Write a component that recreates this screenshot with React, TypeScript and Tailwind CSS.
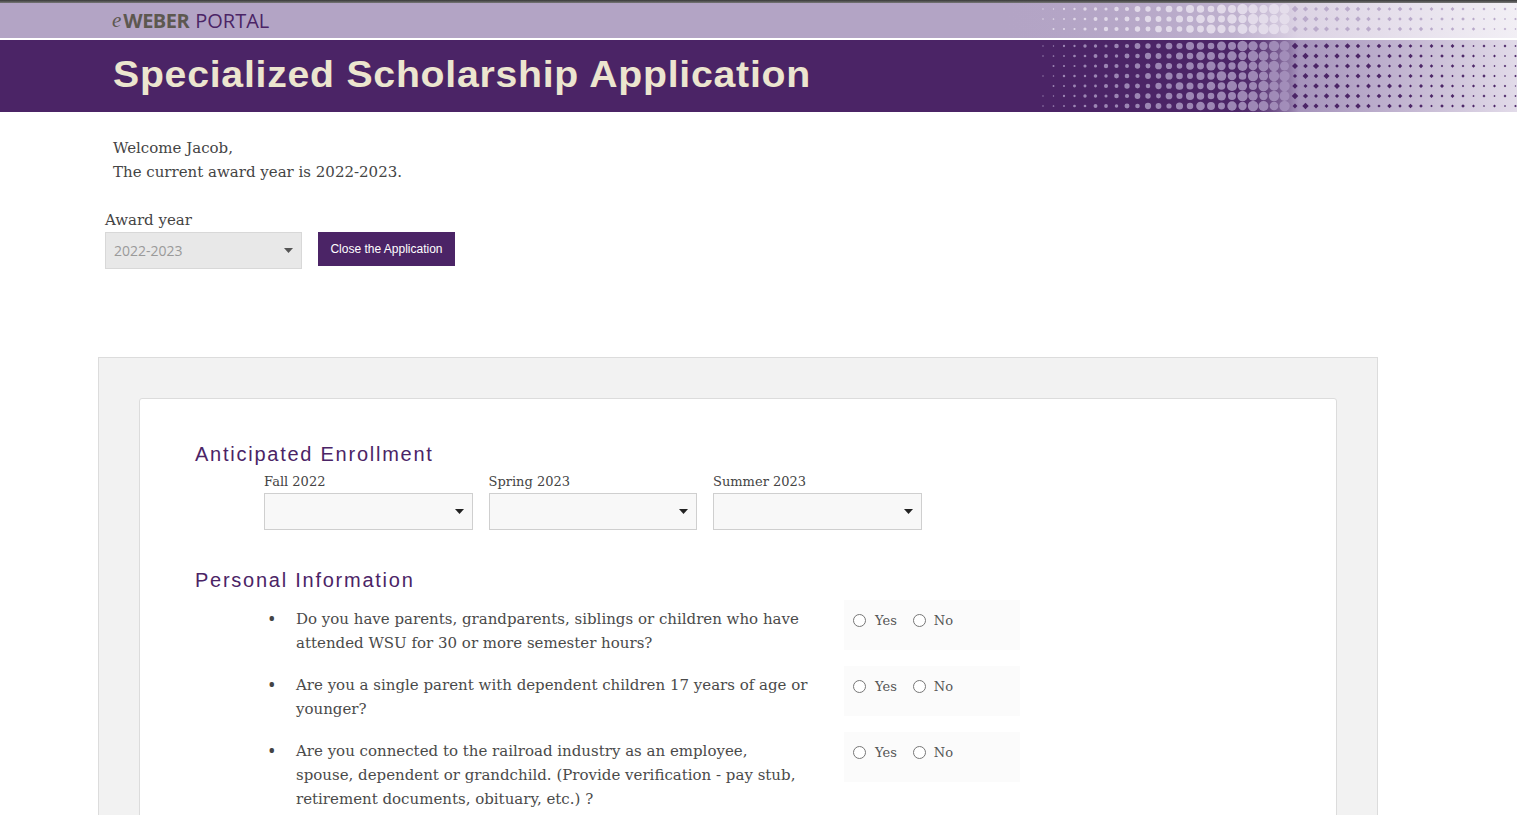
import React from "react";

function Halftone({ h, dark }: { h: number; dark: boolean }) {
  const dots: React.ReactNode[] = [];
  const W = 520;
  for (let r = 0; r * 10 + 5 < h; r++) {
    for (let c = 0; c * 10.5 < W; c++) {
      const x = c * 10.5 + 4;
      const y = r * 10 + 6;
      const gx = x + 997;
      const jitter = ((r * 7 + c * 13) % 5) / 5;
      if (gx < 1292) {
        const rad = Math.max(0, ((gx - 1010) / 250) * 5.5);
        const rr = rad * (0.75 + 0.35 * jitter);
        if (rr > 0.6)
          dots.push(
            <circle key={`${r}-${c}`} cx={x} cy={y} r={Math.min(rr, 5.2)} fill={dark ? "#a591bd" : "#e6dfec"} opacity={0.9} />
          );
      } else {
        const s = Math.max(0.7, 3 - ((gx - 1292) / 228) * 1.8) * (0.7 + 0.5 * jitter);
        dots.push(
          <path
            key={`${r}-${c}`}
            d={`M${x - s} ${y}L${x} ${y - s}L${x + s} ${y}L${x} ${y + s}Z`}
            fill={dark ? "#4b2466" : "#b9a9ca"}
          />
        );
      }
    }
  }
  const id = dark ? "gd" : "gl";
  return (
    <svg width={W} height={h} className="absolute right-0 top-0" viewBox={`0 0 ${W} ${h}`}>
      <defs>
        <linearGradient id={id} x1="0" x2="1" y1="0" y2="0">
          <stop offset="0" stopColor={dark ? "#4b2466" : "#b4a4c6"} stopOpacity="0" />
          <stop offset="0.45" stopColor={dark ? "#4b2466" : "#c6b9d4"} stopOpacity={dark ? 0 : 0.6} />
          <stop offset="0.58" stopColor={dark ? "#a593bb" : "#dcd3e4"} />
          <stop offset="1" stopColor={dark ? "#e2dbe9" : "#f2eff5"} />
        </linearGradient>
      </defs>
      <rect x="0" y="0" width={W} height={h} fill={`url(#${id})`} />
      {dots}
    </svg>
  );
}

function Caret({ color = "#222" }: { color?: string }) {
  return (
    <svg width="9" height="5" viewBox="0 0 9 5">
      <path d="M0 0H9L4.5 5Z" fill={color} />
    </svg>
  );
}

function Radio() {
  return <span className="inline-block h-[13px] w-[13px] rounded-full border border-[#777] bg-white" />;
}

const serif = "font-['DejaVu_Serif',serif]";

function Question({ text }: { text: string }) {
  return (
    <li className="flex">
      <div className="flex w-[588px] pl-[12px]">
        <span className="w-[28px] shrink-0 text-[20px] leading-[24px] text-[#444]">•</span>
        <span className={`${serif} w-[513px] text-[15px] leading-[24px] text-[#4a4a4a]`}>{text}</span>
      </div>
      <div className="-mt-[7px] flex h-[50px] w-[176px] items-start gap-[16px] bg-[#fbfbfb] pl-[9px] pt-[11px]">
        <label className={`${serif} flex items-center text-[13px] text-[#555]`}>
          <Radio />
          <span className="ml-[9px]">Yes</span>
        </label>
        <label className={`${serif} flex items-center text-[13px] text-[#555]`}>
          <Radio />
          <span className="ml-[8px]">No</span>
        </label>
      </div>
    </li>
  );
}

export default function App() {
  return (
    <div className="min-h-[815px] w-[1517px] overflow-hidden bg-white">
      {/* Header */}
      <div className="h-[3px] bg-gradient-to-b from-[#3a3a3a] to-[#777]" />
      <div className="relative h-[35px] overflow-hidden bg-[#b3a4c5]">
        <Halftone h={35} dark={false} />
        <div className="relative flex h-full items-center pl-[112px] pt-[1px] font-['Open_Sans',sans-serif] text-[20px]">
          <span className="mr-[2px] font-['Liberation_Serif',serif] text-[21px] italic text-[#5d5850]">e</span>
          <span className="font-bold tracking-[-0.5px] text-[#5d5850]">WEBER</span>
          <span className="ml-[6px] text-[#4b2466]">PORTAL</span>
        </div>
      </div>
      <div className="h-[2px] bg-white" />
      <div className="relative h-[72px] overflow-hidden bg-[#4b2466]">
        <Halftone h={72} dark={true} />
        <div className="relative flex h-full items-center pl-[113px] pb-[2px]">
          <h1 className="origin-left font-['Liberation_Sans',sans-serif] text-[37px] font-bold tracking-[0.7px] text-[#ece5cf] [transform:scaleX(1.06)]">
            Specialized Scholarship Application
          </h1>
        </div>
      </div>

      {/* Welcome */}
      <div className={`${serif} pl-[113px] pt-[24px] text-[15px] leading-[24px] text-[#444]`}>
        <p>Welcome Jacob,</p>
        <p>The current award year is 2022-2023.</p>
      </div>

      <div className="pl-[105px] pt-[25px]">
        <div className={`${serif} text-[15px] leading-[22px] text-[#444]`}>Award year</div>
        <div className="mt-[1px] flex items-start gap-[16px]">
          <div className="flex h-[37px] w-[197px] items-center justify-between border border-[#d8d8d8] bg-[#e8e8e8] pl-[8px] pr-[8px] font-['Open_Sans',sans-serif] text-[14px] text-[#9a9a9a]">
            <span>2022-2023</span>
            <Caret color="#555" />
          </div>
          <button className="h-[34px] w-[137px] bg-[#4b2466] font-['Liberation_Sans',sans-serif] text-[12px] text-white">
            Close the Application
          </button>
        </div>
      </div>

      {/* Form panel */}
      <div className="ml-[98px] mt-[88px] w-[1280px] border border-[#dcdcdc] bg-[#f2f2f2] px-[40px] pt-[40px]">
        <div className="min-h-[420px] rounded-t-[3px] border border-[#dcdcdc] bg-white pl-[55px] pt-[41px]">
          <h2 className="font-['Liberation_Sans',sans-serif] text-[20px] leading-[28px] tracking-[1.75px] text-[#4b2466]">
            Anticipated Enrollment
          </h2>
          <div className="ml-[69px] mt-[5px] flex gap-[16px]">
            {["Fall 2022", "Spring 2023", "Summer 2023"].map((l) => (
              <div key={l} className="w-[208.5px]">
                <div className={`${serif} text-[13px] leading-[18px] text-[#444]`}>{l}</div>
                <div className="mt-[2px] flex h-[37px] items-center justify-end border border-[#cfcfcf] bg-[#f8f8f8] pr-[8px]">
                  <Caret />
                </div>
              </div>
            ))}
          </div>

          <h2 className="mt-[36px] font-['Liberation_Sans',sans-serif] text-[20px] leading-[28px] tracking-[1.75px] text-[#4b2466]">
            Personal Information
          </h2>
          <ul className="ml-[61px] mt-[13px] flex flex-col gap-[18px]">
            <Question text="Do you have parents, grandparents, siblings or children who have attended WSU for 30 or more semester hours?" />
            <Question text="Are you a single parent with dependent children 17 years of age or younger?" />
            <Question text="Are you connected to the railroad industry as an employee, spouse, dependent or grandchild. (Provide verification - pay stub, retirement documents, obituary, etc.) ?" />
          </ul>
        </div>
      </div>
    </div>
  );
}
